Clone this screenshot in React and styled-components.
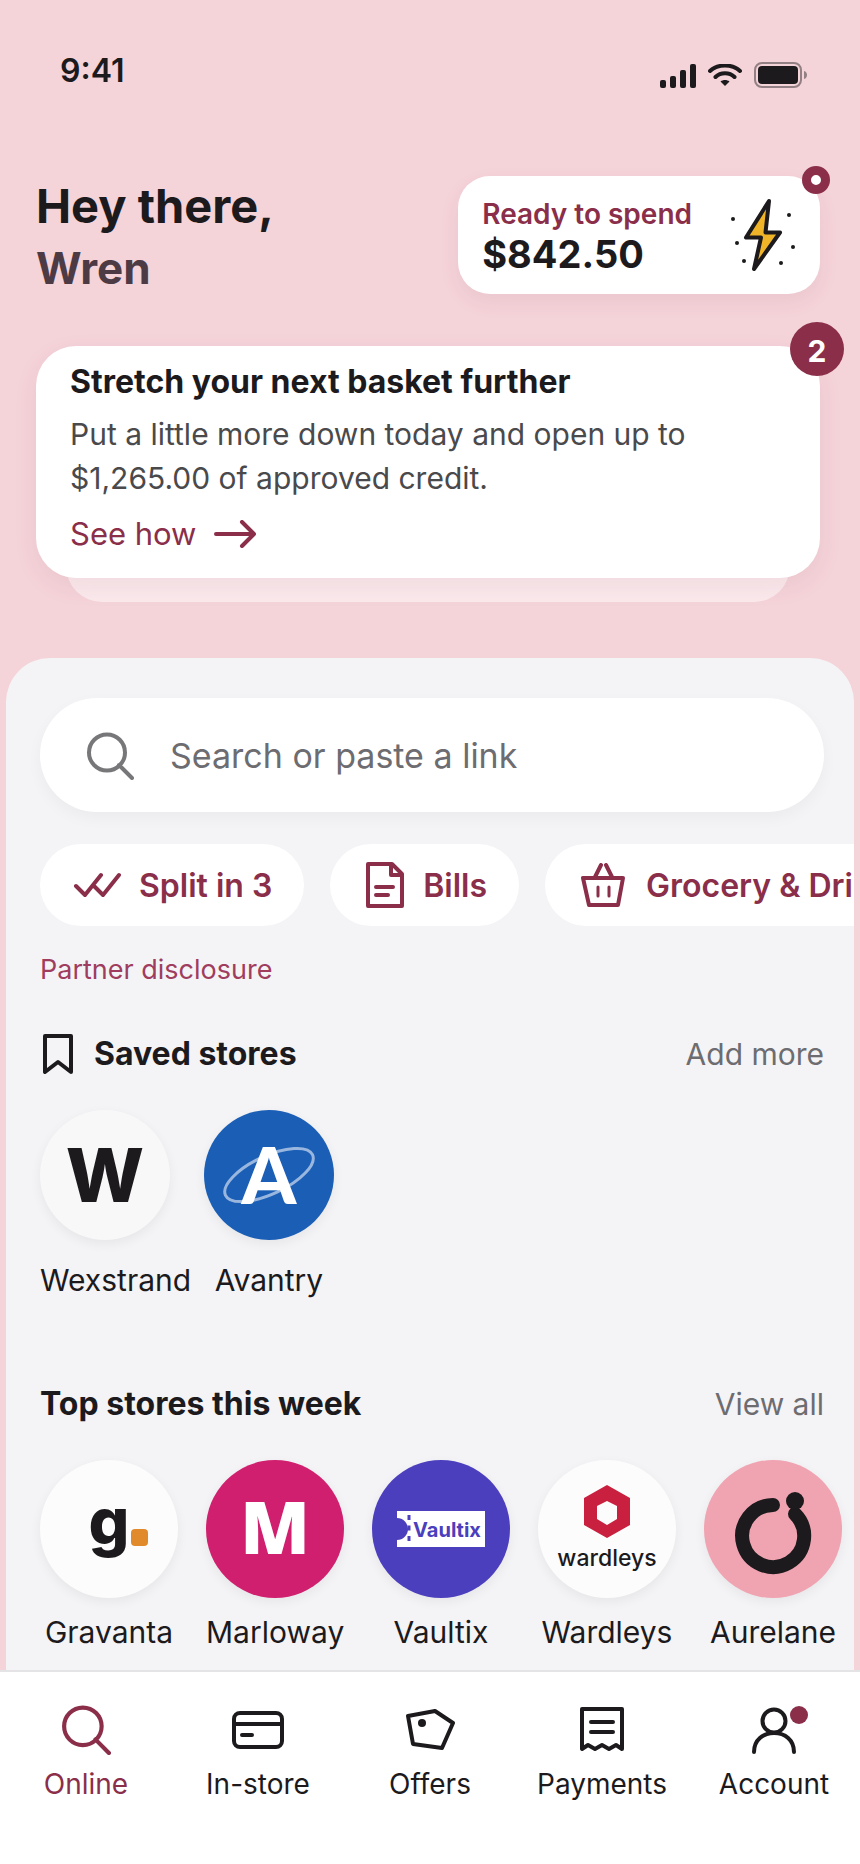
import React from 'react'
import styled, { createGlobalStyle } from 'styled-components'

const colors = {
  pink: '#f4d3d9',
  berry: '#8a2e4a',
  link: '#a03c5e',
  ink: '#1c1a1c',
  body: '#4a494b',
  muted: '#6d6c70',
  sheet: '#f4f4f6',
  white: '#fff',
}

const App = () => (
  <Page>
    <GlobalStyle />

    <StatusBar>
      <Time>9:41</Time>
      <StatusIcons>
        <SignalIcon />
        <WifiIcon />
        <BatteryIcon />
      </StatusIcons>
    </StatusBar>

    <Header>
      <Greeting>
        Hey there,
        <UserName>Wren</UserName>
      </Greeting>
      <BalanceCard href="#balance">
        <BalanceText>
          <BalanceLabel>Ready to spend</BalanceLabel>
          <BalanceAmount>$842.50</BalanceAmount>
        </BalanceText>
        <BoltIcon />
        <RingBadge />
      </BalanceCard>
    </Header>

    <Promo>
      <PromoCard>
        <PromoTitle>Stretch your next basket further</PromoTitle>
        <PromoText>
          Put a little more down today and open up to <br />
          $1,265.00 of approved credit.
        </PromoText>
        <PromoLink href="#how">
          See how <ArrowIcon />
        </PromoLink>
      </PromoCard>
      <CountBadge>2</CountBadge>
    </Promo>

    <Sheet>
      <SearchBox>
        <SearchIcon size={48} stroke={4} />
        <SearchInput
          type="search"
          aria-label="Search or paste a link"
          placeholder="Search or paste a link"
        />
      </SearchBox>

      <Chips>
        <Chip type="button">
          <ChecksIcon /> Split in 3
        </Chip>
        <Chip type="button">
          <BillIcon /> Bills
        </Chip>
        <Chip type="button">
          <BasketIcon /> Grocery &amp; Drinks
        </Chip>
      </Chips>

      <Disclosure href="#disclosure">Partner disclosure</Disclosure>

      <SectionHead>
        <SectionTitle>
          <BookmarkIcon /> Saved stores
        </SectionTitle>
        <SectionLink href="#saved">Add more</SectionLink>
      </SectionHead>
      <SavedStores>
        <Store href="#wexstrand" size={130} space={20}>
          <WexstrandLogo />
          <span>Wexstrand</span>
        </Store>
        <Store href="#avantry" size={130} space={20}>
          <AvantryLogo />
          <span>Avantry</span>
        </Store>
      </SavedStores>

      <SectionHead $top={84}>
        <SectionTitle>Top stores this week</SectionTitle>
        <SectionLink href="#top">View all</SectionLink>
      </SectionHead>
      <TopStores>
        {topStores.map(({ name, Logo }) => (
          <Store key={name} href={`#${name}`} size={138} space={14}>
            <Logo />
            <span>{name}</span>
          </Store>
        ))}
      </TopStores>
    </Sheet>

    <TabBar>
      {tabs.map(({ name, Icon, dot }) => (
        <Tab
          key={name}
          href={`#${name}`}
          $active={name === 'Online'}
          aria-current={name === 'Online' ? 'page' : undefined}
        >
          <TabIcon>
            <Icon />
            {dot && <TabDot />}
          </TabIcon>
          {name}
        </Tab>
      ))}
    </TabBar>
  </Page>
)

export default App

const Store = ({ href, size, space, children }) => (
  <StoreLink href={href} $size={size} $space={space}>
    {children}
  </StoreLink>
)

// ICONS

const SignalIcon = () => (
  <svg width="36" height="24" viewBox="0 0 36 24" fill={colors.ink}>
    <rect y="16" width="6" height="8" rx="2" />
    <rect x="10" y="12" width="6" height="12" rx="2" />
    <rect x="20" y="6" width="6" height="18" rx="2" />
    <rect x="30" width="6" height="24" rx="2" />
  </svg>
)

const WifiIcon = () => (
  <svg width="34" height="24" viewBox="0 0 34 24" fill="none">
    <path
      d="M2 7C6 3.300 11 1.500 17 1.500S28 3.300 32 7M7.500 13C10 10.500 13.300 9.200 17 9.200S24 10.500 26.500 13"
      stroke={colors.ink}
      strokeWidth="4"
      strokeLinecap="round"
    />
    <path
      d="M12.500 17.500C15.200 15.500 18.800 15.500 21.500 17.500L17 22Z"
      fill={colors.ink}
    />
  </svg>
)

const BatteryIcon = () => (
  <svg width="54" height="26" viewBox="0 0 54 26" fill="none">
    <rect
      x="1"
      y="1"
      width="46"
      height="24"
      rx="7"
      stroke={colors.ink}
      strokeOpacity="0.45"
      strokeWidth="2"
    />
    <rect x="4" y="4" width="40" height="18" rx="4" fill={colors.ink} />
    <path d="M50 9C54 10 54 16 50 17Z" fill={colors.ink} opacity="0.45" />
  </svg>
)

const BoltIcon = () => (
  <svg width="66" height="78" viewBox="0 0 66 78" fill={colors.ink}>
    <path
      d="M39 6L16 42.500H31L24 74L50 37.500H35.500Z"
      fill="#f0b429"
      stroke={colors.ink}
      strokeWidth="4"
      strokeLinejoin="round"
    />
    <circle cx="3" cy="24" r="2" />
    <circle cx="7" cy="48" r="2" />
    <circle cx="14" cy="66" r="2" />
    <circle cx="59" cy="20" r="2" />
    <circle cx="63" cy="52" r="2" />
    <circle cx="51" cy="68" r="2" />
  </svg>
)

const ArrowIcon = () => (
  <svg width="42" height="28" viewBox="0 0 42 28" fill="none">
    <path
      d="M2 14H39M28 2L40 14L28 26"
      stroke="currentColor"
      strokeWidth="4"
      strokeLinecap="round"
      strokeLinejoin="round"
    />
  </svg>
)

const SearchIcon = ({ size = 50, stroke = 4 }) => (
  <svg width={size} height={size} viewBox="0 0 48 48" fill="none">
    <path
      d="M39 20.500A18 18 0 1 1 3 20.500A18 18 0 0 1 39 20.500ZM33 33L46 46"
      stroke="currentColor"
      strokeWidth={stroke}
      strokeLinecap="round"
    />
  </svg>
)

const ChecksIcon = () => (
  <svg width="48" height="26" viewBox="0 0 48 26" fill="none">
    <path
      d="M3 14L12 23L28 3M21 14L30 23L46 3"
      stroke="currentColor"
      strokeWidth="4"
      strokeLinecap="round"
      strokeLinejoin="round"
    />
  </svg>
)

const BillIcon = () => (
  <svg width="42" height="46" viewBox="0 0 42 46" fill="none">
    <path
      d="M5 2H29L39 12V44H5ZM28 2V13H39M13 25H30M13 33H25"
      stroke="currentColor"
      strokeWidth="4"
      strokeLinecap="round"
      strokeLinejoin="round"
    />
  </svg>
)

const BasketIcon = () => (
  <svg width="50" height="44" viewBox="0 0 50 44" fill="none">
    <path
      d="M5 15H45L40 42H11ZM17 14L23 2M34 14L28 2"
      stroke="currentColor"
      strokeWidth="4"
      strokeLinecap="round"
      strokeLinejoin="round"
    />
    <path
      d="M20 24V33M31 24V33"
      stroke="currentColor"
      strokeWidth="3"
      strokeLinecap="round"
    />
  </svg>
)

const BookmarkIcon = () => (
  <svg width="34" height="40" viewBox="0 0 34 40" fill="none">
    <path
      d="M5 1H31V37L18 27L5 37Z"
      stroke="currentColor"
      strokeWidth="4"
      strokeLinejoin="round"
      transform="translate(0 1)"
    />
  </svg>
)

const CardIcon = () => (
  <svg width="52" height="48" viewBox="0 0 52 48" fill="none">
    <path
      d="M8 7H44A6 6 0 0 1 50 13V35A6 6 0 0 1 44 41H8A6 6 0 0 1 2 35V13A6 6 0 0 1 8 7ZM2 18H50M10 29H20"
      stroke="currentColor"
      strokeWidth="4"
      strokeLinecap="round"
    />
  </svg>
)

const TagIcon = () => (
  <svg width="50" height="48" viewBox="0 0 50 48" fill="none">
    <path
      d="M3 10L30 5L48 17L37 42L8 38Z"
      stroke="currentColor"
      strokeWidth="4"
      strokeLinejoin="round"
    />
    <circle cx="17" cy="17" r="4" fill="currentColor" />
  </svg>
)

const ReceiptIcon = () => (
  <svg width="44" height="48" viewBox="0 0 44 48" fill="none">
    <path
      d="M2 3H42V43L36 39L29 43L22 39L15 43L8 39L2 43ZM11 16H33M11 26H33"
      stroke="currentColor"
      strokeWidth="4"
      strokeLinecap="round"
      strokeLinejoin="round"
    />
  </svg>
)

const PersonIcon = () => (
  <svg width="46" height="48" viewBox="0 0 46 48" fill="none">
    <circle cx="23" cy="15" r="11.500" stroke="currentColor" strokeWidth="4" />
    <path
      d="M3 46C3 34 12 27 23 27S43 34 43 46"
      stroke="currentColor"
      strokeWidth="4"
      strokeLinecap="round"
    />
  </svg>
)

// STORE LOGOS

const WexstrandLogo = () => (
  <Logo viewBox="0 0 130 130" $color="#f8f8f9">
    <LogoText x="65" y="92" $size={74} $weight={800}>
      W
    </LogoText>
  </Logo>
)

const AvantryLogo = () => (
  <Logo viewBox="0 0 130 130" $color="#1b5eb6">
    <ellipse
      cx="65"
      cy="65"
      rx="48"
      ry="19"
      transform="rotate(-25 65 65)"
      fill="none"
      stroke="#fff"
      strokeOpacity="0.55"
      strokeWidth="3"
    />
    <LogoText x="65" y="94" $size={78} $weight={900} $family="Lato" $fill="#fff">
      A
    </LogoText>
  </Logo>
)

const GravantaLogo = () => (
  <Logo viewBox="0 0 138 138" $color="#fcfcfc">
    <LogoText x="69" y="84" $size={64} $weight={800}>
      g
    </LogoText>
    <rect x="91" y="69" width="17" height="17" rx="4" fill="#e08a2c" />
  </Logo>
)

const MarlowayLogo = () => (
  <Logo viewBox="0 0 138 138" $color="#d01f6e">
    <LogoText
      x="69"
      y="94"
      $size={72}
      $weight={800}
      $family="'Open Sans'"
      $fill="#fff"
    >
      M
    </LogoText>
  </Logo>
)

const VaultixLogo = () => (
  <Logo viewBox="0 0 138 138" $color="#4b3fbd">
    <path d="M25 51H113V87H25V80A11 11 0 0 0 25 58Z" fill="#fff" />
    <path
      d="M37 55V81"
      stroke="#4b3fbd"
      strokeWidth="3"
      strokeDasharray="5 5.500"
    />
    <LogoText x="75" y="77" $size={20} $weight={700} $fill="#4b3fbd">
      Vaultix
    </LogoText>
  </Logo>
)

const WardleysLogo = () => (
  <Logo viewBox="0 0 138 138" $color="#fcfcfc">
    <path
      d="M69 25L92 38V65L69 78L46 65V38ZM69 41L59 46V59L69 65L79 59V46Z"
      fill="#c8203e"
      fillRule="evenodd"
    />
    <LogoText x="69" y="106" $size={23} $weight={500}>
      wardleys
    </LogoText>
  </Logo>
)

const AurelaneLogo = () => (
  <Logo viewBox="0 0 138 138" $color="#f0a3b1">
    <path
      d="M69 45A31 31 0 1 0 91 54"
      fill="none"
      stroke={colors.ink}
      strokeWidth="14"
      strokeLinecap="round"
    />
    <circle cx="91" cy="41" r="9" fill={colors.ink} />
  </Logo>
)

const topStores = [
  { name: 'Gravanta', Logo: GravantaLogo },
  { name: 'Marloway', Logo: MarlowayLogo },
  { name: 'Vaultix', Logo: VaultixLogo },
  { name: 'Wardleys', Logo: WardleysLogo },
  { name: 'Aurelane', Logo: AurelaneLogo },
]

const tabs = [
  { name: 'Online', Icon: SearchIcon },
  { name: 'In-store', Icon: CardIcon },
  { name: 'Offers', Icon: TagIcon },
  { name: 'Payments', Icon: ReceiptIcon },
  { name: 'Account', Icon: PersonIcon, dot: true },
]

// STYLES

const GlobalStyle = createGlobalStyle`
  * {
    box-sizing: border-box;
  }

  body {
    background-color: ${colors.pink};
    color: ${colors.ink};
    font-family: Inter, 'Liberation Sans', sans-serif;
    font-size: 32px;
    margin: 0;
  }

  a {
    color: inherit;
    text-decoration: none;
  }

  svg {
    display: block;
    flex-shrink: 0;
  }
`

const Page = styled.div`
  display: flex;
  flex-direction: column;
  min-height: 100vh;
`

const StatusBar = styled.div`
  align-items: center;
  display: flex;
  justify-content: space-between;
  padding: 50px 52px 0 60px;
`

const Time = styled.span`
  font-weight: 600;
  font-size: 32px;
  line-height: 42px;
`

const StatusIcons = styled.div`
  align-items: flex-end;
  display: flex;
  gap: 12px;
  padding-top: 8px;
`

const Header = styled.header`
  align-items: flex-start;
  display: flex;
  justify-content: space-between;
  margin-top: 84px;
  padding: 0 40px 0 36px;
`

const Greeting = styled.h1`
  font-size: 47px;
  font-weight: 700;
  line-height: 60px;
  margin: 0;
`

const UserName = styled.span`
  color: #4c3a44;
  display: block;
  font-size: 44px;
  line-height: 64px;
`

const BalanceCard = styled.a`
  align-items: center;
  background-color: ${colors.white};
  border-radius: 32px;
  box-shadow: 0 8px 20px rgba(138, 46, 74, 0.08);
  display: flex;
  gap: 38px;
  padding: 18px 24px 20px 24px;
  position: relative;
`

const BalanceText = styled.div`
  display: flex;
  flex-direction: column;
  line-height: 40px;
`

const BalanceLabel = styled.span`
  color: ${colors.berry};
  font-size: 28px;
  font-weight: 600;
`

const BalanceAmount = styled.strong`
  font-size: 38px;
  font-weight: 700;
`

const RingBadge = styled.span`
  background-color: ${colors.white};
  border: 9px solid ${colors.berry};
  border-radius: 50%;
  height: 28px;
  position: absolute;
  right: -10px;
  top: -10px;
  width: 28px;
`

const Promo = styled.section`
  isolation: isolate;
  margin: 46px 40px 0 36px;
  position: relative;

  &::after {
    background-color: rgba(255, 255, 255, 0.5);
    border-radius: 36px;
    bottom: -24px;
    content: '';
    height: 80px;
    left: 30px;
    position: absolute;
    right: 30px;
    z-index: -1;
  }
`

const PromoCard = styled.div`
  background-color: ${colors.white};
  border-radius: 40px;
  box-shadow: 0 8px 24px rgba(138, 46, 74, 0.08);
  line-height: 44px;
  padding: 14px 34px 22px 34px;
`

const PromoTitle = styled.h2`
  font-size: 32px;
  font-weight: 700;
  margin: 0;
`

const PromoText = styled.p`
  color: ${colors.body};
  font-size: 30px;
  margin: 8px 0 12px 0;
`

const PromoLink = styled.a`
  align-items: center;
  color: ${colors.berry};
  display: inline-flex;
  font-size: 31px;
  gap: 18px;
  vertical-align: top;
`

const CountBadge = styled.span`
  background-color: ${colors.berry};
  border-radius: 50%;
  color: ${colors.white};
  font-size: 30px;
  font-weight: 700;
  height: 54px;
  line-height: 58px;
  position: absolute;
  right: -24px;
  text-align: center;
  top: -24px;
  width: 54px;
`

const Sheet = styled.main`
  background-color: ${colors.sheet};
  border-radius: 44px 44px 0 0;
  flex: 1;
  margin: 80px 6px 0 6px;
  overflow: hidden;
  padding: 40px 30px 18px 34px;
`

const SearchBox = styled.label`
  align-items: center;
  background-color: ${colors.white};
  border-radius: 57px;
  box-shadow: 0 6px 16px rgba(0, 0, 0, 0.04);
  color: #77777a;
  display: flex;
  gap: 36px;
  height: 114px;
  padding: 2px 46px 0 46px;
`

const SearchInput = styled.input`
  background: none;
  border: 0;
  color: ${colors.ink};
  flex: 1;
  font-family: inherit;
  font-size: 34px;
  line-height: 48px;
  min-width: 0;
  outline: 0;
  padding: 0;

  &::placeholder {
    color: ${colors.muted};
    opacity: 1;
  }
`

const Chips = styled.div`
  display: flex;
  gap: 26px;
  margin: 32px -30px 0 0;
  overflow: hidden;
`

const Chip = styled.button`
  align-items: center;
  background-color: ${colors.white};
  border: 0;
  border-radius: 41px;
  color: ${colors.berry};
  display: flex;
  flex-shrink: 0;
  font-family: inherit;
  font-size: 32px;
  font-weight: 600;
  gap: 18px;
  height: 82px;
  padding: 0 32px 0 33px;
  white-space: nowrap;
`

const Disclosure = styled.a`
  color: ${colors.link};
  display: table;
  font-size: 27px;
  line-height: 36px;
  margin-top: 26px;
`

const SectionHead = styled.div`
  align-items: center;
  display: flex;
  justify-content: space-between;
  line-height: 40px;
  margin-top: ${({ $top = 46 }) => $top}px;
`

const SectionTitle = styled.h2`
  align-items: center;
  display: flex;
  font-size: 32px;
  font-weight: 700;
  gap: 20px;
  margin: 0;
`

const SectionLink = styled.a`
  color: ${colors.muted};
  font-size: 30px;
`

const SavedStores = styled.div`
  display: flex;
  gap: 34px;
  margin-top: 36px;
`

const TopStores = styled.div`
  display: flex;
  gap: 28px;
  margin: 36px -30px 0 0;
`

const StoreLink = styled.a`
  display: flex;
  flex-direction: column;
  flex-shrink: 0;
  font-size: 30px;
  gap: ${({ $space }) => $space}px;
  line-height: 40px;
  text-align: center;
  width: ${({ $size }) => $size}px;
`

const Logo = styled.svg`
  background-color: ${({ $color }) => $color};
  border-radius: 50%;
  box-shadow: 0 4px 12px rgba(0, 0, 0, 0.06);
  width: 100%;
`

const LogoText = styled.text`
  fill: ${({ $fill = colors.ink }) => $fill};
  font-family: ${({ $family = 'Inter' }) => $family}, sans-serif;
  font-size: ${({ $size }) => $size}px;
  font-weight: ${({ $weight }) => $weight};
  text-anchor: middle;
`

const TabBar = styled.nav`
  background-color: ${colors.white};
  border-top: 2px solid #e4e3e6;
  display: grid;
  grid-template-columns: repeat(5, 1fr);
  padding: 34px 0 62px 0;
`

const Tab = styled.a`
  align-items: center;
  color: ${({ $active }) => ($active ? colors.berry : colors.ink)};
  display: flex;
  flex-direction: column;
  font-size: 28px;
  gap: 12px;
  line-height: 36px;
`

const TabIcon = styled.span`
  align-items: center;
  display: flex;
  height: 48px;
  position: relative;
`

const TabDot = styled.span`
  background-color: ${colors.berry};
  border-radius: 50%;
  height: 18px;
  position: absolute;
  right: -11px;
  top: 0;
  width: 18px;
`
